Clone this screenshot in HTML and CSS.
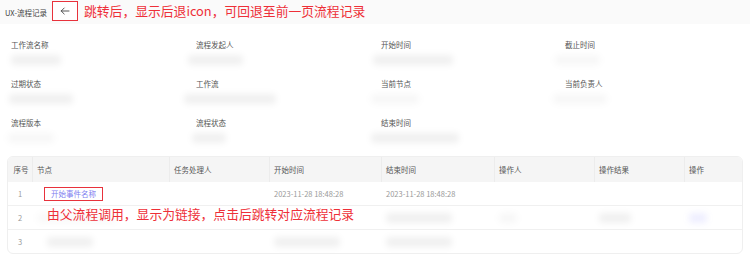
FILE: index.html
```html
<!DOCTYPE html>
<html lang="zh">
<head>
<meta charset="utf-8">
<link rel="stylesheet" href="styles.css">
</head>
<body>
<div class="page">
  <header class="topbar">
    <span class="title">UX-流程记录</span>
    <button class="back" aria-label="back">
      <svg width="10" height="8" viewBox="0 0 10 8"><path d="M9 4H1.2M4.2 1L1.2 4l3 3" fill="none" stroke="#444" stroke-width="0.9" stroke-linecap="round" stroke-linejoin="round"/></svg>
    </button>
    <span class="note">跳转后，显示后退icon，可回退至前一页流程记录</span>
  </header>

  <section class="info">
    <div class="cell"><div class="label">工作流名称</div><div class="blob" style="width:50px"></div></div>
    <div class="cell"><div class="label">流程发起人</div><div class="blob" style="width:55px;margin-left:-8px"></div></div>
    <div class="cell"><div class="label">开始时间</div><div class="blob" style="width:80px;margin-left:-8px"></div></div>
    <div class="cell"><div class="label">截止时间</div><div class="blob light" style="width:45px;margin-left:-10px"></div></div>

    <div class="cell"><div class="label">过期状态</div><div class="blob" style="width:64px;margin-left:-2px"></div></div>
    <div class="cell"><div class="label">工作流</div><div class="blob" style="width:92px;margin-left:-12px"></div></div>
    <div class="cell"><div class="label">当前节点</div><div class="blob light" style="width:48px;margin-left:-10px"></div></div>
    <div class="cell"><div class="label">当前负责人</div><div class="blob light" style="width:54px;margin-left:-12px"></div></div>

    <div class="cell"><div class="label">流程版本</div><div class="blob light" style="width:46px;margin-left:-3px"></div></div>
    <div class="cell"><div class="label">流程状态</div><div class="blob" style="width:34px;margin-left:-4px"></div></div>
    <div class="cell"><div class="label">结束时间</div><div class="blob" style="width:88px;margin-left:-10px"></div></div>
    <div class="cell"></div>
  </section>

  <section class="table">
    <div class="row head">
      <div class="c c-no">序号</div>
      <div class="c">节点</div>
      <div class="c">任务处理人</div>
      <div class="c">开始时间</div>
      <div class="c">结束时间</div>
      <div class="c">操作人</div>
      <div class="c">操作结果</div>
      <div class="c">操作</div>
    </div>
    <div class="row">
      <div class="c c-no">1</div>
      <div class="c"><a class="link">开始事件名称</a></div>
      <div class="c"></div>
      <div class="c date">2023-11-28 18:48:28</div>
      <div class="c date">2023-11-28 18:48:28</div>
      <div class="c"></div>
      <div class="c"></div>
      <div class="c"></div>
    </div>
    <div class="row">
      <div class="c c-no">2</div>
      <div class="c"><div class="blob faint" style="width:80px"></div></div>
      <div class="c"></div>
      <div class="c"></div>
      <div class="c"><div class="blob" style="width:66px"></div></div>
      <div class="c"><div class="blob light" style="width:18px"></div></div>
      <div class="c"><div class="blob" style="width:32px"></div></div>
      <div class="c"><div class="blob purple" style="width:18px"></div></div>
    </div>
    <div class="row last">
      <div class="c c-no">3</div>
      <div class="c"><div class="blob" style="width:46px;margin-left:10px"></div></div>
      <div class="c"></div>
      <div class="c"><div class="blob" style="width:66px"></div></div>
      <div class="c"><div class="blob" style="width:66px"></div></div>
      <div class="c"></div>
      <div class="c"></div>
      <div class="c"></div>
    </div>
    <div class="note note-table">由父流程调用，显示为链接，点击后跳转对应流程记录</div>
  </section>
</div>
</body>
</html>
```

FILE: styles.css
```css
* { box-sizing: border-box; }
html, body { margin: 0; padding: 0; background: #fff; }
body {
  font-family: "Noto Sans CJK SC", "Noto Sans", sans-serif;
  color: #555;
  width: 750px;
  height: 258px;
  overflow: hidden;
}
.page { width: 750px; }

.topbar {
  height: 24px;
  background: #fafafa;
  display: flex;
  align-items: center;
  padding-left: 5px;
}
.title {
  font-size: 7.5px;
  color: #444;
  width: 47px;
}
.back {
  width: 26px;
  height: 20px;
  border: 1.5px solid #e8323c;
  background: #fff;
  display: flex;
  align-items: center;
  justify-content: center;
  padding: 0;
  margin-top: -2px;
}
.note {
  color: #ee2f38;
  font-size: 12.8px;
  line-height: 16px;
  white-space: nowrap;
}
.topbar .note { margin-left: 6px; margin-top: -2px; }

.info {
  display: grid;
  grid-template-columns: 185px 185px 184px 185px;
  padding: 15px 0 0 11px;
}
.cell { height: 39px; }
.label {
  font-size: 7.5px;
  line-height: 12px;
  color: #555;
}
.blob {
  height: 10px;
  margin-top: 4px;
  background: rgba(0, 0, 0, 0.06);
  filter: blur(3px);
  border-radius: 4px;
}
.blob.light { background: rgba(0, 0, 0, 0.03); }
.blob.faint { background: rgba(0, 0, 0, 0.025); }
.blob.purple { background: rgba(90, 90, 255, 0.1); }

.table {
  position: relative;
  margin: 0 7px;
  border: 1px solid #efefef;
  border-radius: 6px;
  overflow: hidden;
}
.row {
  display: grid;
  grid-template-columns: 24px 137px 100px 112px 113px 100px 90px 1fr;
  height: 24px;
  border-bottom: 1px solid #f0f0f0;
  align-items: center;
}
.row.last { border-bottom: none; height: 23px; }
.row.head {
  background: #f5f5f5;
  height: 25px;
  border-bottom: none;
}
.c {
  font-size: 7.5px;
  color: #555;
  padding-left: 5px;
  height: 100%;
  display: flex;
  align-items: center;
}
.row.head .c + .c { box-shadow: inset 1px 0 0 #ececec; }
.row.head .c { height: 25px; }
.c-no { justify-content: center; padding-left: 0; color: #999; }
.row.head .c-no { color: #555; padding-left: 2px; }
.c .blob { margin-top: 0; }
.date { color: #999; }
.link {
  color: #8080f0;
  font-size: 7.5px;
  border: 1.5px solid #e8323c;
  padding: 1px 6px;
  margin-left: 7px;
  line-height: 10px;
}
.note-table {
  position: absolute;
  left: 39px;
  top: 49px;
}
```
